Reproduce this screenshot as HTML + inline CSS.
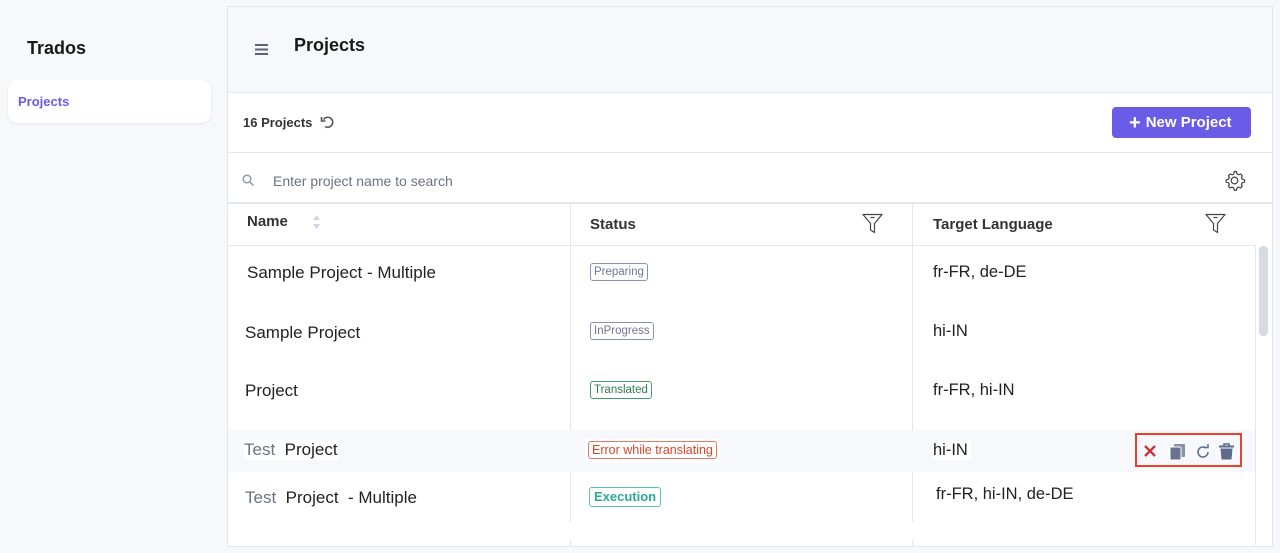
<!DOCTYPE html>
<html><head><meta charset="utf-8"><style>
*{margin:0;padding:0;box-sizing:border-box}
body{width:1280px;height:553px;background:#f7f8fb;font-family:"Liberation Sans",sans-serif;position:relative;overflow:hidden;color:#222}
.a{position:absolute;white-space:nowrap}
.badge{position:absolute;font-size:11.5px;border:1px solid;border-radius:3px;padding:1px 3px;line-height:14px;background:#fff}
.hl{position:absolute;height:1px;background:#e3e6ee}
.vl{position:absolute;width:1px;background:#e3e6ee}
.nm{font-size:17px;color:#222}
.lg{font-size:16.5px;color:#222}
</style></head><body>
<div class="a" style="left:27px;top:38px;font-size:18px;font-weight:bold;color:#1a1a1a">Trados</div>
<div class="a" style="left:8px;top:80px;width:203px;height:43px;background:#fff;border-radius:10px;box-shadow:0 1px 3px rgba(0,0,0,.08)"></div>
<div class="a" style="left:18px;top:94px;font-size:13px;font-weight:bold;color:#6b5ce7">Projects</div>

<div class="a" style="left:227px;top:6px;width:1046px;height:541px;border:1px solid #e3e6ee;background:#fff"></div>
<div class="a" style="left:228px;top:7px;width:1044px;height:85px;background:#f7f8fb"></div>
<svg class="a" style="left:255px;top:43px" width="14" height="13"><path d="M0 2H13M0 6.5H13M0 11H13" stroke="#5a6478" stroke-width="2"/></svg>
<div class="a" style="left:294px;top:35px;font-size:18px;font-weight:bold;color:#1a1a1a">Projects</div>
<div class="hl" style="left:228px;top:92px;width:1044px"></div>

<div class="a" style="left:243px;top:115px;font-size:13px;font-weight:bold;color:#333">16 Projects</div>
<svg class="a" style="left:320px;top:115px" width="15" height="14" viewBox="0 0 15 14"><path d="M3.5 4.5A5 5 0 1 1 5 11.5" fill="none" stroke="#555" stroke-width="1.6"/><path d="M1.5 2V6H5.5" fill="none" stroke="#555" stroke-width="1.6"/></svg>
<div class="a" style="left:1112px;top:107px;width:139px;height:31px;background:#6b5ce7;border-radius:4px;color:#fff;font-size:15px;font-weight:bold;line-height:31px;padding-left:17px"><span style="font-size:20px;vertical-align:-2px;margin-right:5px">+</span>New Project</div>
<div class="hl" style="left:228px;top:152px;width:1044px"></div>

<svg class="a" style="left:242px;top:174px" width="13" height="13"><circle cx="5" cy="5" r="3.8" fill="none" stroke="#8c96a8" stroke-width="1.4"/><path d="M8 8L11.5 11.5" stroke="#8c96a8" stroke-width="1.4"/></svg>
<div class="a" style="left:273px;top:173px;font-size:14px;color:#6b7280">Enter project name to search</div>
<svg class="a" style="left:1223px;top:169px" width="23" height="23" viewBox="0 0 24 24"><path d="M12 2.5l2 .3.6 2.3 1.6.9 2.3-.7 1.5 1.6-.7 2.3.9 1.6 2.3.6v2.2l-2.3.6-.9 1.6.7 2.3-1.5 1.6-2.3-.7-1.6.9-.6 2.3h-2.2l-.6-2.3-1.6-.9-2.3.7-1.5-1.6.7-2.3-.9-1.6-2.3-.6v-2.2l2.3-.6.9-1.6-.7-2.3 1.5-1.6 2.3.7 1.6-.9.6-2.3z" fill="none" stroke="#444" stroke-width="1.3"/><circle cx="12" cy="12" r="3.5" fill="none" stroke="#444" stroke-width="1.3"/></svg>
<div class="hl" style="left:228px;top:202px;width:1044px;height:2px"></div>

<div class="a" style="left:247px;top:213px;font-size:15px;font-weight:bold;color:#333">Name</div>
<svg class="a" style="left:312px;top:215px" width="9" height="14"><path d="M4.5 0L8 5H1z M4.5 14L8 9H1z" fill="#cfd4de"/></svg>
<div class="a" style="left:590px;top:216px;font-size:15px;font-weight:bold;color:#333">Status</div>
<svg class="a" style="left:862px;top:213px" width="21" height="21" viewBox="0 0 21 21"><path d="M1 1.5H20L12.5 10.5V19.5L8.5 17V10.5Z" fill="none" stroke="#444" stroke-width="1.2" stroke-linejoin="round"/><path d="M8.5 4.5H12.5" stroke="#444" stroke-width="1.2"/></svg>
<div class="a" style="left:933px;top:216px;font-size:15px;font-weight:bold;color:#333">Target Language</div>
<svg class="a" style="left:1205px;top:213px" width="21" height="21" viewBox="0 0 21 21"><path d="M1 1.5H20L12.5 10.5V19.5L8.5 17V10.5Z" fill="none" stroke="#444" stroke-width="1.2" stroke-linejoin="round"/><path d="M8.5 4.5H12.5" stroke="#444" stroke-width="1.2"/></svg>
<div class="hl" style="left:228px;top:245px;width:1028px"></div>
<div class="vl" style="left:570px;top:202px;height:320px"></div>
<div class="vl" style="left:912px;top:202px;height:320px"></div>
<div class="vl" style="left:570px;top:540px;height:7px"></div>
<div class="vl" style="left:912px;top:540px;height:7px"></div>
<div class="vl" style="left:1255px;top:245px;height:300px"></div>
<div class="a" style="left:1259px;top:246px;width:9px;height:90px;background:#d6dae2;border-radius:4px"></div>

<div class="a" style="left:228px;top:430px;width:1027px;height:42px;background:#f7f8fb"></div>

<div class="a nm" style="left:247px;top:263px">Sample Project - Multiple</div>
<div class="badge" style="left:590px;top:263px;color:#6b7796;border-color:#8893ad">Preparing</div>
<div class="a lg" style="left:933px;top:263px">fr-FR, de-DE</div>

<div class="a nm" style="left:245px;top:323px">Sample Project</div>
<div class="badge" style="left:590px;top:322px;color:#6b7796;border-color:#8893ad">InProgress</div>
<div class="a lg" style="left:933px;top:322px">hi-IN</div>

<div class="a nm" style="left:245px;top:381px">Project</div>
<div class="badge" style="left:590px;top:381px;color:#2f7d4f;border-color:#4a9a6a">Translated</div>
<div class="a lg" style="left:933px;top:381px">fr-FR, hi-IN</div>

<div class="a nm" style="left:244px;top:440px;background:#fff"><span style="color:#6b7280">Test</span>&nbsp; Project</div>
<div class="a" style="left:585px;top:439px;width:135px;height:24px;background:#fff"></div>
<div class="badge" style="left:588px;top:441px;color:#d9452b;border-color:#e07a66;font-size:12.5px;padding:1px 3px">Error while translating</div>
<div class="a lg" style="left:933px;top:441px;background:#fff;padding-right:3px">hi-IN</div>
<div class="a" style="left:1135px;top:433px;width:107px;height:34px;border:2px solid #e8412a"></div>
<svg class="a" style="left:1143px;top:444px" width="14" height="14"><path d="M2 2L12 12M12 2L2 12" stroke="#c9343a" stroke-width="2.4"/></svg>
<svg class="a" style="left:1169px;top:443px" width="18" height="18"><rect x="5" y="1" width="11" height="13" fill="#8a90a8" rx="1"/><rect x="1" y="4" width="11" height="13" fill="#6b7290" stroke="#fff" stroke-width="1" rx="1"/></svg>
<svg class="a" style="left:1195px;top:444px" width="16" height="16" viewBox="0 0 16 16"><path d="M13 8A5 5 0 1 1 11 4" fill="none" stroke="#5a6a90" stroke-width="1.5"/><path d="M9 3.5H13V0" fill="none" stroke="#5a6a90" stroke-width="1.5"/></svg>
<svg class="a" style="left:1218px;top:443px" width="17" height="17"><path d="M1 3.5H16" stroke="#5e6a8c" stroke-width="2"/><path d="M6 3V1H11V3" fill="none" stroke="#5e6a8c" stroke-width="1.6"/><path d="M2.5 5.5H14.5L13.5 16.5H3.5Z" fill="#5e6a8c"/></svg>

<div class="a nm" style="left:245px;top:488px"><span style="color:#6b7280">Test</span>&nbsp; Project&nbsp; - Multiple</div>
<div class="badge" style="left:589px;top:487px;color:#2fa89a;border-color:#5cc0b4;font-size:13px;font-weight:bold;padding:2px 4px">Execution</div>
<div class="a lg" style="left:936px;top:485px">fr-FR, hi-IN, de-DE</div>
</body></html>
